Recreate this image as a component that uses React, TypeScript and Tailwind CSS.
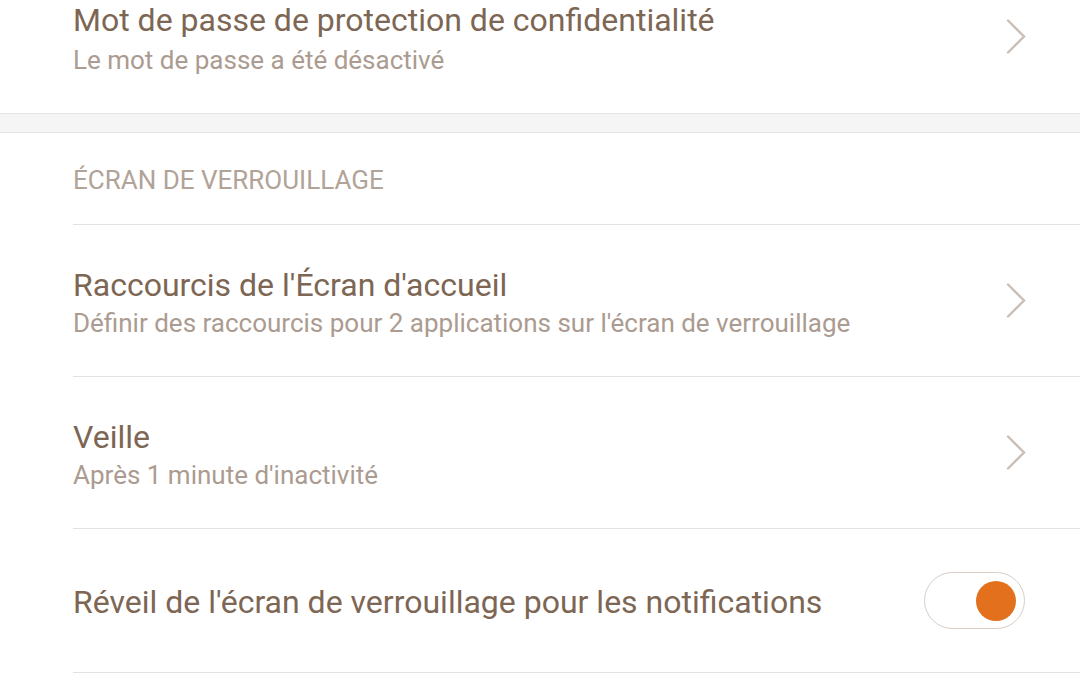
import React from "react";

const Chevron = () => (
  <svg width="20" height="35" viewBox="0 0 20 35" fill="none">
    <polyline points="2,1.5 18,17.5 2,33.5" stroke="#cabfb6" strokeWidth="2.4" strokeLinecap="round" strokeLinejoin="miter" fill="none" />
  </svg>
);

export default function App() {
  return (
    <div
      className="w-[1080px] h-[700px] overflow-hidden bg-white"
      style={{ fontFamily: "Roboto, 'Noto Sans', sans-serif" }}
    >
      <div className="h-[113px] flex items-start justify-between pl-[73px] pr-[54px]">
        <div className="flex flex-col mt-[0px]">
          <span className="text-[32px] leading-[40px] text-[#7d6653]">Mot de passe de protection de confidentialité</span>
          <span className="text-[26px] leading-[40px] text-[#ab9b90]">Le mot de passe a été désactivé</span>
        </div>
        <div className="mt-[19px]">
          <Chevron />
        </div>
      </div>
      <div className="h-[20px] bg-[#f5f5f5] border-y border-[#e4e4e4]" />
      <div className="pl-[73px]">
        <div className="h-[92px] flex items-center pt-[4px] border-b border-[#e2e2e2]">
          <span className="text-[26px] text-[#b1a398]">ÉCRAN DE VERROUILLAGE</span>
        </div>
        <div className="h-[152px] flex items-center justify-between pr-[54px] border-b border-[#e2e2e2]">
          <div className="flex flex-col mt-[4px]">
            <span className="text-[32px] leading-[40px] text-[#7d6653]">Raccourcis de l'Écran d'accueil</span>
            <span className="text-[26px] leading-[36px] text-[#ab9b90]">Définir des raccourcis pour 2 applications sur l'écran de verrouillage</span>
          </div>
          <Chevron />
        </div>
        <div className="h-[152px] flex items-center justify-between pr-[54px] border-b border-[#e2e2e2]">
          <div className="flex flex-col mt-[4px]">
            <span className="text-[32px] leading-[40px] text-[#7d6653]">Veille</span>
            <span className="text-[26px] leading-[36px] text-[#ab9b90]">Après 1 minute d'inactivité</span>
          </div>
          <Chevron />
        </div>
        <div className="h-[144px] flex items-center justify-between pr-[55px] border-b border-[#e2e2e2]">
          <span className="text-[32px] leading-[40px] text-[#7d6653] mt-[3px]">Réveil de l'écran de verrouillage pour les notifications</span>
          <div className="w-[101px] h-[57px] rounded-full border border-[#d8cec7] flex items-center justify-end pr-[8px]">
            <div className="w-[40px] h-[40px] rounded-full bg-[#e2701d]" />
          </div>
        </div>
      </div>
    </div>
  );
}
